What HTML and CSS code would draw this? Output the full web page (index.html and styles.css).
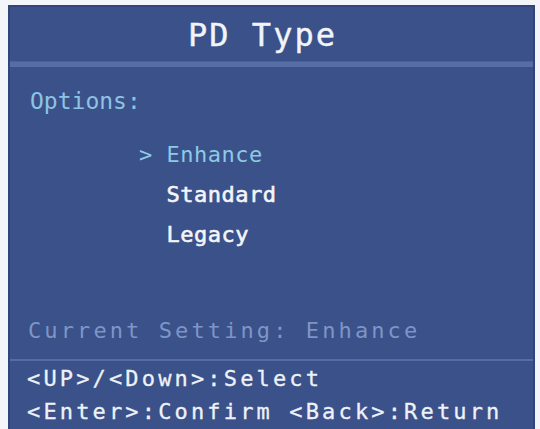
FILE: index.html
```html
<!DOCTYPE html>
<html>
<head>
    <title>PD Type</title>
    <link rel="stylesheet" href="styles.css">
</head>
<body>
    <div class="osd">
        <div class="osd-title">PD Type</div>
        <div class="osd-rule"></div>
        <div class="osd-body">
            <div class="osd-label">Options:</div>
            <ul class="osd-menu">
                <li class="selected"><span class="mark">&gt;</span> Enhance</li>
                <li><span class="mark"> </span> Standard</li>
                <li><span class="mark"> </span> Legacy</li>
            </ul>
            <div class="osd-current">Current Setting: Enhance</div>
        </div>
        <div class="osd-help">
            <div>&lt;UP&gt;/&lt;Down&gt;:Select</div>
            <div>&lt;Enter&gt;:Confirm &lt;Back&gt;:Return</div>
        </div>
    </div>
</body>
</html>
```

FILE: styles.css
```css
body {
    margin: 0;
    background-color: #f3f5f9;
    font-family: "DejaVu Sans Mono", "Liberation Mono", monospace;
    overflow: hidden;
}
.osd {
    margin: 5px 0 0 8px;
    width: 523px;
    height: 440px;
    background-color: #3b5189;
    border: 2px solid #31457c;
    border-bottom: none;
    display: flex;
    flex-direction: column;
}
.osd-title {
    height: 52px;
    padding-top: 2px;
    line-height: 52px;
    font-size: 32px;
    letter-spacing: 2px;
    text-align: center;
    color: #f1f4f9;
    padding-right: 18px;
    -webkit-text-stroke: 0.4px #f1f4f9;
}
.osd-rule {
    height: 5px;
    background-color: #566ea6;
    border-top: 1px solid #4a619a;
}
.osd-body {
    padding: 19px 0 0 0;
}
.osd-label {
    padding-left: 20px;
    font-size: 23px;
    line-height: 30px;
    color: #8ec3e3;
}
.osd-menu {
    list-style: none;
    margin: 19px 0 0 0;
    padding: 0 0 0 129px;
}
.osd-menu li {
    font-size: 22px;
    line-height: 40px;
    letter-spacing: 0.5px;
    color: #f3f5f8;
    white-space: pre;
    -webkit-text-stroke: 0.6px #f3f5f8;
}
.osd-menu .selected {
    color: #8ccae6;
    -webkit-text-stroke: 0;
}
.osd-current {
    margin-top: 61px;
    padding-left: 18px;
    font-size: 22px;
    line-height: 30px;
    letter-spacing: 3.1px;
    color: #7e95c7;
}
.osd-help {
    margin-top: 13px;
    border-top: 2px solid #556da5;
    padding: 1px 0 0 17px;
    font-size: 22px;
    line-height: 33px;
    letter-spacing: 3.15px;
    color: #eef2f8;
    -webkit-text-stroke: 0.3px #eef2f8;
}
```
